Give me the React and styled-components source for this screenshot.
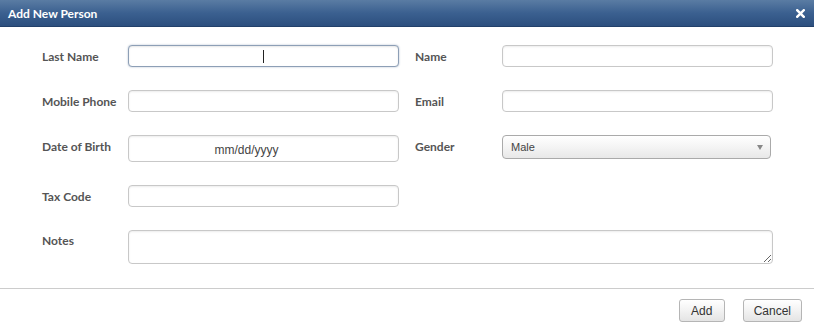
import React from "react";
import styled, { createGlobalStyle, css } from "styled-components";

const GlobalStyle = createGlobalStyle`
  html, body {
    margin: 0;
    padding: 0;
    background: #ffffff;
  }
  body {
    font-family: "Liberation Sans", Arial, sans-serif;
    font-size: 12px;
  }
`;

const App = () => {
  return (
    <>
      <GlobalStyle />
      <Dialog>
        <TitleBar>
          <Title>Add New Person</Title>
          <CloseButton aria-label="close">
            <svg width="9" height="9" viewBox="0 0 9 9">
              <path
                d="M1.2 1.2 L7.8 7.8 M7.8 1.2 L1.2 7.8"
                stroke="#ffffff"
                strokeWidth="2.4"
                strokeLinecap="square"
              />
            </svg>
          </CloseButton>
        </TitleBar>

        <Form>
          <Label col={1}>Last Name</Label>
          <FieldWrap>
            <TextInput focused defaultValue="" />
            <Caret />
          </FieldWrap>
          <Label col={4}>Name</Label>
          <TextInput />

          <Label col={1}>Mobile Phone</Label>
          <TextInput />
          <Label col={4}>Email</Label>
          <TextInput />

          <Label col={1}>Date of Birth</Label>
          <DateInput readOnly value="mm/dd/yyyy" />
          <Label col={4}>Gender</Label>
          <Select>
            <span>Male</span>
            <Arrow />
          </Select>

          <Label col={1}>Tax Code</Label>
          <TextInput />

          <Label col={1} short>
            Notes
          </Label>
          <Notes />
        </Form>

        <Divider />

        <Footer>
          <Button>Add</Button>
          <Button>Cancel</Button>
        </Footer>
      </Dialog>
    </>
  );
};

export default App;

const Dialog = styled.div`
  width: 814px;
  height: 334px;
  display: flex;
  flex-direction: column;
  background: #ffffff;
  overflow: hidden;

  & > * {
    flex-shrink: 0;
  }
`;

const TitleBar = styled.div`
  box-sizing: border-box;
  height: 27px;
  display: flex;
  align-items: center;
  justify-content: space-between;
  padding: 0 9px 0 8px;
  background: linear-gradient(to bottom, #5a7ca3 0%, #3b6090 50%, #2c4f7e 100%);
  border-bottom: 1px solid #22406a;
`;

const Title = styled.span`
  font-family: Lato, "Open Sans", sans-serif;
  font-weight: 700;
  font-size: 12px;
  color: #ffffff;
`;

const CloseButton = styled.span`
  display: flex;
  align-items: center;
  margin-top: 1px;
`;

const Form = styled.div`
  display: grid;
  grid-template-columns: 86px 271px 16px 87px 271px;
  align-items: start;
  row-gap: 23px;
  padding: 18px 0 24px 42px;
`;

const Label = styled.label`
  grid-column-start: ${(p) => p.col};
  height: ${(p) => (p.short ? "20px" : "22px")};
  font-family: Lato, "Open Sans", sans-serif;
  font-weight: 700;
  font-size: 12px;
  color: #555555;
  display: flex;
  align-items: center;
`;

const inputBase = css`
  box-sizing: border-box;
  width: 271px;
  height: 22px;
  border: 1px solid #c8c8c8;
  border-radius: 4px;
  background: #ffffff;
  box-shadow: inset 0 1px 2px rgba(0, 0, 0, 0.08);
  font-family: "Liberation Sans", Arial, sans-serif;
  font-size: 12px;
  color: #555555;
  outline: none;
  padding: 0 6px;
  margin: 0;
`;

const FieldWrap = styled.div`
  position: relative;
  display: flex;
`;

const TextInput = styled.input`
  ${inputBase}
  ${(p) =>
    p.focused &&
    css`
      border-color: #8d9fb6;
      box-shadow: 0 0 2px rgba(70, 100, 140, 0.45),
        inset 0 1px 2px rgba(0, 0, 0, 0.1);
    `}
`;

const Caret = styled.span`
  position: absolute;
  left: 135px;
  top: 5px;
  width: 1px;
  height: 13px;
  background: #222222;
`;

const DateInput = styled.input`
  ${inputBase}
  height: 27px;
  padding: 2px 40px 0 6px;
  text-align: center;
  color: #444444;
`;

const Select = styled.div`
  box-sizing: border-box;
  width: 269px;
  height: 24px;
  display: flex;
  align-items: center;
  justify-content: space-between;
  padding: 0 7px 0 8px;
  border: 1px solid #aaaaaa;
  border-radius: 4px;
  background: linear-gradient(to bottom, #ffffff 0%, #f4f4f4 50%, #e8e8e8 100%);
  font-family: "Liberation Sans", Arial, sans-serif;
  font-size: 11px;
  color: #444444;
`;

const Arrow = styled.span`
  width: 0;
  height: 0;
  border-left: 3px solid transparent;
  border-right: 3px solid transparent;
  border-top: 5px solid #888888;
  margin-top: 1px;
`;

const Notes = styled.textarea`
  ${inputBase}
  grid-column: 2 / 6;
  width: 645px;
  height: 34px;
  resize: vertical;
  display: block;
`;

const Divider = styled.div`
  height: 1px;
  background: #cccccc;
`;

const Footer = styled.div`
  display: flex;
  justify-content: flex-end;
  gap: 18px;
  padding: 10px 12px 0 0;
`;

const Button = styled.button`
  box-sizing: border-box;
  height: 23px;
  min-width: 46px;
  padding: 0 10px;
  border: 1px solid #b5b5b5;
  border-radius: 3px;
  background: linear-gradient(to bottom, #ffffff 0%, #f1f1f1 55%, #e4e4e4 100%);
  font-family: "Liberation Sans", Arial, sans-serif;
  font-size: 12px;
  color: #333333;
  cursor: pointer;
`;
